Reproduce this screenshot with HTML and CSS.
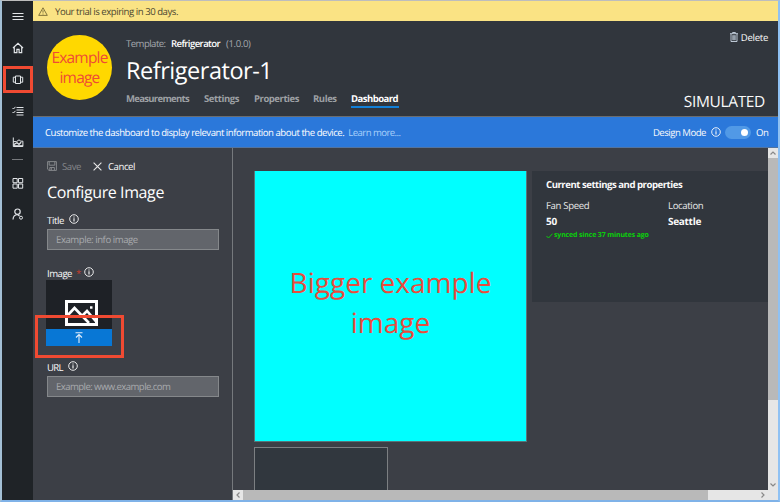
FILE: index.html
```html
<!DOCTYPE html>
<html lang="en">
<head>
<meta charset="utf-8">
<title>Refrigerator-1</title>
<link rel="stylesheet" href="styles.css">
</head>
<body>
<svg class="defs" width="0" height="0">
  <symbol id="info" viewBox="0 0 10 10"><circle cx="5" cy="5" r="4.3" fill="none" stroke="currentColor" stroke-width=".9"/><path d="M5 4.300v3.200M5 2.500v1" stroke="currentColor" stroke-width="1.100"/></symbol>
</svg>
<div class="app">
  <nav class="rail">
    <a class="rail-item"><svg width="12" height="12" viewBox="0 0 12 12"><path d="M.5 2.500h11M.5 5.500h11M.5 8.500h11" stroke-width="1.200"/></svg></a>
    <a class="rail-item"><svg width="12" height="12" viewBox="0 0 12 12"><path d="M1 6 6 1.300 11 6M2.300 5v5.600h2.600V7.300h2.200v3.300h2.600V5" stroke-width="1.200"/></svg></a>
    <a class="rail-item selected"><svg width="12" height="12" viewBox="0 0 12 12"><path d="M3.500 2h5v7.500h-5zM3.500 3.200H1.300v5h2.200M8.500 3.200h2.200v5H8.500"/></svg></a>
    <a class="rail-item"><svg width="12" height="12" viewBox="0 0 12 12"><path d="M4.500 2.500h7M4.500 5h7M4.500 7.500h7M4.500 10h7M.5 3l1 1 2-2.200M.5 7l1 1 2-2.200"/></svg></a>
    <a class="rail-item"><svg width="12" height="12" viewBox="0 0 12 12"><path d="M1.300 1.500v9h9.600V5.200H8.800L7 3.800 4.600 5.600H1.300"/><path d="M2 10.500V8.500l3-1.700 2 1.500 2.200-2" stroke-width="1.300"/><path d="M2 9.700h9"/></svg></a>
    <hr>
    <a class="rail-item"><svg width="12" height="12" viewBox="0 0 12 12"><path d="M1 1.500h4.200v4.200H1zM6.500 1.500h4.200v4.200H6.500zM1 7h4.200v4.200H1zM6.500 7h4.200v4.200H6.500z"/></svg></a>
    <a class="rail-item"><svg width="12" height="12" viewBox="0 0 12 12"><circle cx="5.500" cy="3.700" r="2.700" stroke-width="1.200"/><path d="M1 11.500c.2-2.700 2-4.800 4.400-5L7.500 8" stroke-width="1.200"/><circle cx="9" cy="9.700" r="1.500"/></svg></a>
  </nav>
  <div class="page">
    <div class="trial">
      <svg width="10" height="9" viewBox="0 0 10 9"><path d="M5 .8 9.300 8.400H.7zM5 3.200v2.500M5 6.500v1" fill="none" stroke="#665a2c" stroke-width=".8"/></svg>
      <span>Your trial is expiring in 30 days.</span>
    </div>
    <header class="header">
      <div class="avatar">Example<br>image</div>
      <div class="heading">
        <div class="template"><span class="t-label">Template:</span><b>Refrigerator</b><span class="t-ver">(1.0.0)</span></div>
        <h1>Refrigerator-1</h1>
        <div class="tabs"><a class="t1">Measurements</a><a class="t2">Settings</a><a class="t3">Properties</a><a class="t4">Rules</a><a class="t5 active">Dashboard</a></div>
      </div>
      <div class="side">
        <div class="delete"><svg width="8" height="10" viewBox="0 0 8 10"><path d="M0 1.700h8M2.600 1.500V.5h2.800v1M1 2v7.500h6V2M2.900 3.200v5M5.100 3.200v5M4 3.200v5" fill="none" stroke="#cdd9e6" stroke-width=".9"/></svg><span>Delete</span></div>
        <div class="simulated">SIMULATED</div>
      </div>
    </header>
    <div class="notice">
      <span class="msg">Customize the dashboard to display relevant information about the device.</span>
      <a class="learn">Learn more...</a>
      <span class="mode">Design Mode</span>
      <svg class="info" width="10" height="10"><use href="#info"/></svg>
      <span class="switch"></span>
      <span class="on">On</span>
    </div>
    <main class="main">
      <section class="config">
        <div class="actions">
          <svg width="10" height="10" viewBox="0 0 10 10"><path d="M.6.6h8.800v8.800H2L.6 8.200zM2.200.8v3.400h5.600V.8M2.800 9.300V6.500h4.600v2.800M4.300 7v2" fill="none" stroke="#85878b" stroke-width="1"/></svg>
          <span class="save">Save</span>
          <svg class="x" width="9" height="9" viewBox="0 0 9 9"><path d="m.6.6 7.800 7.800M8.400.6.6 8.400" stroke="#e8e8e8" stroke-width="1.100"/></svg>
          <span class="cancel">Cancel</span>
        </div>
        <h2>Configure Image</h2>
        <div class="label"><span class="l-title">Title</span><svg class="info" width="10" height="10"><use href="#info"/></svg></div>
        <div class="input"><span class="p1">Example: info image</span></div>
        <div class="label image-label"><span class="l-image">Image</span><i>*</i><svg class="info" width="10" height="10"><use href="#info"/></svg></div>
        <div class="picker">
          <svg class="photo" width="33" height="26" viewBox="0 0 33 26"><path d="M1.500 1.500h30v23h-30z"/><path d="m2 16 7.500-8L24 23M17.500 15.500l4.500-4.500L31 21.500" stroke-width="2.600"/><path d="M25 7.500h2.500" stroke-width="2.500"/></svg>
          <div class="upload"><svg width="8" height="11" viewBox="0 0 8 11"><path d="M.5.7h7M4 2.500v8.500M1 5.500l3-3 3 3" fill="none" stroke="#e3eefa" stroke-width="1.100"/></svg></div>
          <div class="callout"></div>
        </div>
        <div class="label url-label"><span class="l-url">URL</span><svg class="info" width="10" height="10"><use href="#info"/></svg></div>
        <div class="input"><span class="p2">Example: www.example.com</span></div>
      </section>
      <section class="board">
        <div class="canvas">
          <div class="tiles">
            <div class="image-tile">Bigger example<br>image</div>
            <div class="empty-tile"></div>
          </div>
          <div class="settings-tile">
            <h3>Current settings and properties</h3>
            <div class="cols">
              <div class="fan"><div class="name n1">Fan Speed</div><div class="value v1">50</div><div class="sync"><svg width="7" height="6" viewBox="0 0 7 6"><path d="m.5 3 2 2L6.500.7" fill="none" stroke="#0ad00a"/></svg><span>synced since 37 minutes ago</span></div></div>
              <div class="loc"><div class="name n2">Location</div><div class="value v2">Seattle</div></div>
            </div>
          </div>
        </div>
        <div class="vbar"><div class="btn"><svg width="6" height="4" viewBox="0 0 6 4"><path d="m.5 3.500L3 1l2.500 2.500"/></svg></div><div class="thumb"></div><div class="btn end"><svg width="6" height="4" viewBox="0 0 6 4"><path d="M.5.5 3 3 5.500.5"/></svg></div></div>
        <div class="hbar"><div class="btn"><svg width="4" height="6" viewBox="0 0 4 6"><path d="M3.500.5 1 3l2.500 2.500"/></svg></div><div class="thumb"></div><div class="btn end"><svg width="4" height="6" viewBox="0 0 4 6"><path d="M.5.5 3 3 .5 5.500"/></svg></div></div>
      </section>
    </main>
  </div>
</div>
</body>
</html>
```
FILE: styles.css
```css
* { box-sizing: border-box; }
body { margin: 0; font-family: "Noto Sans", "Open Sans", sans-serif; font-size: 9.6px; letter-spacing: -.5px; color: #fafafa; white-space: nowrap; text-rendering: geometricPrecision; }
svg { display: block; flex: none; }
.defs { position: absolute; }
.app { width: 780px; height: 502px; display: flex; background: #1f2226; border-style: solid; border-width: 1px 2px 2px 2px; border-color: #bdbdbd #8fc1f3 #7fb2e8 #a3bfd5; overflow: hidden; font-family: "Open Sans", "Noto Sans", sans-serif; letter-spacing: -.45px; }
.rail { width: 31px; flex: none; background: #1f2327; display: flex; flex-direction: column; }
.rail-item { height: 31.5px; display: flex; align-items: center; justify-content: center; }
.rail-item svg { fill: none; stroke: #e2e5e8; stroke-width: 1; }
.rail-item.selected { border: 3px solid #f04a32; height: 27px; margin: 2px 0 2px 1px; width: 30px; }
.rail hr { width: 11px; height: 1px; border: 0; margin: 1px auto 7px; background: #777a7d; }
.page { flex: 1; min-width: 0; display: flex; flex-direction: column; background: #3c3f46; }
.trial { height: 20px; background: #fae384; color: #4d4831; display: flex; align-items: center; padding-left: 5px; gap: 7px; letter-spacing: -.47px; }
.header { height: 96px; background: #31363d; border-bottom: 1px solid #6a6d70; display: flex; }
.avatar { width: 65px; height: 65px; margin: 14px 0 0 14px; border-radius: 50%; background: #ffd800; color: #ef4a36; font: 15.5px/20px "Open Sans", sans-serif; text-align: center; padding-top: 12px; letter-spacing: -.8px; }
.heading { margin-left: 14px; padding-top: 15px; flex: 1; }
.template { height: 15px; line-height: 15px; display: flex; }
.template b { color: #fff; font-weight: 600; margin-left: 6px; letter-spacing: -.6px; }
.t-label, .t-ver { color: #a4a8ad; }
.t-label { width: 39px; letter-spacing: -.55px; }
.t-ver { margin-left: 6px; letter-spacing: -.4px; }
h1 { margin: 2px 0 0; height: 34px; font-weight: 400; font-size: 23.5px; line-height: 34px; color: #fff; letter-spacing: -.47px; }
.tabs { display: flex; margin-top: 4px; }
.tabs a { height: 17px; line-height: 16px; font-size: 9.5px; font-weight: 700; color: #9da0a4; }
.tabs .t1 { width: 78px; letter-spacing: -.68px; }
.tabs .t2 { width: 50px; letter-spacing: -.42px; }
.tabs .t3 { width: 59px; letter-spacing: -.45px; }
.tabs .t4 { width: 38px; letter-spacing: -.42px; }
.tabs .t5 { width: 48px; letter-spacing: -.52px; }
.tabs .active { color: #fff; border-bottom: 2px solid #1280d8; }
.side { display: flex; flex-direction: column; align-items: flex-end; padding-right: 10px; }
.delete { display: flex; align-items: center; gap: 3px; height: 14px; margin-top: 9px; letter-spacing: -.3px; }
.simulated { font-size: 15.5px; line-height: 20px; margin: 47px 3px 0 0; letter-spacing: -.35px; }
.notice { height: 31px; background: #2b78da; border-bottom: 1px solid #53749f; display: flex; align-items: center; padding: 0 10px 0 12px; }
.msg { letter-spacing: -.48px; color: #fff; }
.learn { color: #a8d0fa; margin-left: 4px; letter-spacing: -.57px; }
.mode { margin-left: auto; letter-spacing: -.5px; }
.notice .info { margin-left: 5px; }
.switch { width: 26px; height: 13px; border-radius: 7px; background: #5199e6; margin: 0 5px 0 4px; display: flex; justify-content: flex-end; align-items: center; padding-right: 3px; }
.switch::after { content: ""; width: 7px; height: 7px; border-radius: 50%; background: #fff; }
.on { width: 12px; }
.main { flex: 1; min-height: 0; display: flex; }
.config { width: 200px; flex: none; border-right: 1px solid #76797d; padding: 10px 0 0 14px; }
.actions { display: flex; align-items: center; height: 16px; }
.save { color: #85878b; width: 19px; margin-left: 5px; }
.x { margin-left: 12px; }
.cancel { margin-left: 6px; }
h2 { margin: 6px 0 0; font-weight: 400; font-size: 16px; line-height: 24px; color: #fff; letter-spacing: -.4px; }
.label { display: flex; align-items: center; height: 14px; margin-top: 9px; }
.label .info { position: relative; top: -1px; }
.l-title { width: 22px; letter-spacing: -.4px; }
.l-image { width: 29px; letter-spacing: -.5px; }
.l-url { width: 21px; letter-spacing: -.7px; }
.label i { color: #c33b2b; font-style: normal; width: 8px; }
.input { width: 172px; height: 21px; margin-top: 2px; background: #62656b; border: 1px solid #85888b; padding-left: 8px; color: #a8aaad; line-height: 19px; }
.p2 { letter-spacing: -.58px; }
.image-label { margin-top: 16px; }
.picker { position: relative; width: 66px; height: 66px; background: #1e2126; margin: 0 0 0 -1px; padding-top: 20px; }
.photo { margin: 0 0 0 19px; fill: none; stroke: #fff; stroke-width: 3; }
.upload { height: 17px; margin-top: 3px; background: #0877d5; display: flex; justify-content: center; align-items: center; }
.callout { position: absolute; left: -11px; top: 35px; width: 89px; height: 43px; border: 3px solid #f04a32; }
.url-label { margin-top: 14px; }
.board { flex: 1; min-width: 0; display: grid; grid-template: 342px 10px / 1fr 10px; }
.canvas { overflow: hidden; display: flex; padding: 23px 0 0 21px; gap: 5px; }
.tiles { flex: none; width: 273px; }
.image-tile { height: 271px; background: #0ff; border: 1px solid #587579; border-top: 0; color: #e84c3d; font: 28px/40px "Open Sans", sans-serif; letter-spacing: 0; text-align: center; padding-top: 92px; }
.empty-tile { margin-top: 5px; width: 134px; height: 60px; background: #31373e; border: 1px solid #7c7f82; }
.settings-tile { flex: 1; height: 131px; background: #31363d; padding: 6px 0 0 14px; }
h3 { margin: 0; font-size: 9.6px; line-height: 15px; font-weight: 700; letter-spacing: -.48px; }
.cols { display: flex; margin-top: 6px; }
.fan { width: 122px; }
.name { line-height: 15px; color: #e8e8e8; letter-spacing: -.35px; }
.value { font-size: 10px; line-height: 16px; font-weight: 700; letter-spacing: -.3px; }
.sync { display: flex; align-items: center; gap: 1px; height: 13px; color: #0ad00a; font-size: 7px; font-weight: 700; letter-spacing: -.15px; }
.vbar, .hbar { background: #e6e6e6; display: flex; }
.vbar { flex-direction: column; }
.hbar { grid-column: 1 / 3; }
.btn { width: 10px; height: 10px; flex: none; display: flex; align-items: center; justify-content: center; }
.btn svg { fill: none; stroke: #888; stroke-width: 1.2; }
.thumb { background: #b9b9b9; }
.vbar .thumb { height: 242px; }
.hbar .thumb { width: 465px; }
.end { margin-top: auto; }
.hbar .end { margin: 0 10px 0 auto; }
```
